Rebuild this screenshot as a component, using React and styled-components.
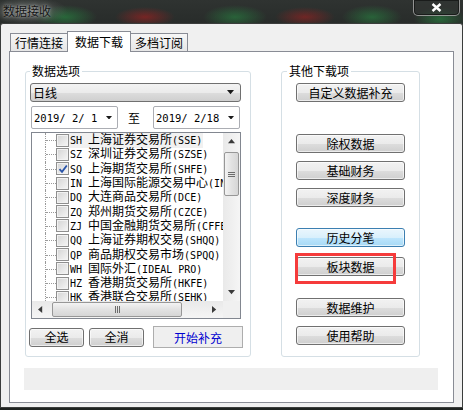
import React from "react";
import styled, { createGlobalStyle, css } from "styled-components";

const CJK = `"Noto Sans CJK SC", "Noto Sans", sans-serif`;
const MONO = `"DejaVu Sans Mono", "Liberation Mono", monospace`;

const GlobalStyle = createGlobalStyle`
  html, body { margin: 0; padding: 0; background: #1f2321; }
  body { font-family: ${CJK}; font-size: 12px; color: #000; }
  * { box-sizing: border-box; }
`;

const exchanges = [
  { code: "SH", name: "上海证券交易所", ex: "(SSE)", focus: true },
  { code: "SZ", name: "深圳证券交易所", ex: "(SZSE)" },
  { code: "SQ", name: "上海期货交易所", ex: "(SHFE)", checked: true },
  { code: "IN", name: "上海国际能源交易中心", ex: "(INE)" },
  { code: "DQ", name: "大连商品交易所", ex: "(DCE)" },
  { code: "ZQ", name: "郑州期货交易所", ex: "(CZCE)" },
  { code: "ZJ", name: "中国金融期货交易所", ex: "(CFFEX)" },
  { code: "QQ", name: "上海证券期权交易", ex: "(SHQQ)" },
  { code: "QP", name: "商品期权交易市场", ex: "(SPQQ)" },
  { code: "WH", name: "国际外汇", ex: "(IDEAL PRO)" },
  { code: "HZ", name: "香港期货交易所", ex: "(HKFE)" },
  { code: "HK", name: "香港联合交易所", ex: "(SEHK)" },
];

// right side buttons, gap = space above the button
const tools = [
  { label: "自定义数据补充", gap: 0 },
  { label: "除权数据", gap: 32 },
  { label: "基础财务", gap: 8 },
  { label: "深度财务", gap: 8 },
  { label: "历史分笔", gap: 21, hot: true },
  { label: "板块数据", gap: 10, marked: true },
  { label: "数据维护", gap: 22 },
  { label: "使用帮助", gap: 9 },
];

const Window = styled.div`
  width: 463px;
  height: 410px;
  display: flex;
  flex-direction: column;
  overflow: hidden;
  background:
    radial-gradient(ellipse 40px 14px at 28px 11px, rgba(120, 124, 122, 0.7), transparent),
    radial-gradient(ellipse 32px 12px at 65px 17px, rgba(40, 150, 70, 0.55), transparent),
    radial-gradient(ellipse 30px 10px at 145px 17px, rgba(180, 30, 30, 0.55), transparent),
    radial-gradient(ellipse 32px 12px at 235px 17px, rgba(40, 150, 70, 0.5), transparent),
    radial-gradient(ellipse 30px 10px at 305px 17px, rgba(180, 30, 30, 0.5), transparent),
    radial-gradient(ellipse 30px 12px at 372px 17px, rgba(40, 150, 70, 0.5), transparent),
    radial-gradient(ellipse 26px 12px at 440px 19px, rgba(40, 150, 70, 0.55), transparent),
    linear-gradient(#2f3331, #262a28 30px, #1e2220);
`;

const TitleBar = styled.div`
  flex: none;
  height: 23px;
  display: flex;
  justify-content: space-between;
  align-items: flex-start;
`;

const Title = styled.div`
  padding: 3px 0 0 3px;
  line-height: 16px;
  color: #141414;
  text-shadow: 0 0 5px rgba(255, 255, 255, 0.55), 0 0 2px rgba(255, 255, 255, 0.4);
`;

const Close = styled.div`
  width: 47px;
  height: 16px;
  margin-right: 3px;
  display: flex;
  align-items: center;
  justify-content: center;
  border: 1px solid rgba(190, 190, 190, 0.7);
  border-top: none;
  border-radius: 0 0 5px 5px;
  box-shadow: inset 0 0 0 1px #1a1c1b;
  background: rgba(50, 54, 52, 0.6);
`;

const Client = styled.div`
  flex: none;
  height: 385px;
  border: 1px solid #3b3d3c;
  border-radius: 3px 3px 0 0;
  background: #f0f0f0;
  padding: 7px 8px 0 8px;
`;

const TabStrip = styled.div`
  height: 20px;
  display: flex;
  align-items: flex-end;
  padding-left: 2px;
  position: relative;
  z-index: 1;
`;

const Tab = styled.div`
  height: 18px;
  padding: 0 4px;
  line-height: 17px;
  border: 1px solid #898c95;
  border-bottom: none;
  margin-left: -1px;
  background: linear-gradient(#f7f7f7, #e6e6e6);
  ${(p) =>
    p.$active &&
    css`
      height: 21px;
      padding: 0 7px;
      line-height: 19px;
      margin-bottom: -1px;
      background: #fff;
    `}
`;

const Panel = styled.div`
  height: 352px;
  border: 1px solid #898c95;
  background: #fff;
  padding: 11px 14px 0 14px;
`;

const Groups = styled.div`
  display: flex;
  gap: 30px;
  padding-left: 1px;
`;

const Group = styled.fieldset`
  margin: 0;
  width: ${(p) => p.$w}px;
  height: 294px;
  border: 1px solid #d5dfe5;
  border-radius: 3px;
  padding: 4px ${(p) => p.$pad}px 0 ${(p) => p.$pad}px;
  display: flex;
  flex-direction: column;
  align-items: flex-start;
`;

const Legend = styled.legend`
  padding: 0 2px;
  line-height: 16px;
  font-size: 12px;
`;

const Combo = styled.div`
  width: 211px;
  height: 19px;
  display: flex;
  align-items: center;
  justify-content: space-between;
  padding: 0 6px 0 2px;
  border: 1px solid #707070;
  border-radius: 3px;
  background: linear-gradient(#f3f3f3, #ebebeb 50%, #dddddd 51%, #cfcfcf);
`;

const DateRow = styled.div`
  margin-top: 4px;
  display: flex;
  align-items: center;
  padding-left: 1px;
`;

const DateBox = styled.div`
  width: 87px;
  height: 23px;
  display: flex;
  align-items: center;
  justify-content: space-between;
  padding: 0 5px 0 2px;
  border: 1px solid #abadb3;
  border-radius: 2px;
  background: #fff;
  font-family: ${MONO};
  font-size: 10.5px;
`;

const To = styled.span`
  margin: 0 13px 0 10px;
`;

const ListBox = styled.div`
  margin: 3px 0 0 1px;
  width: 210px;
  height: 187px;
  border: 1px solid #828790;
  display: grid;
  grid-template-columns: 1fr 17px;
  grid-template-rows: 1fr 17px;
  background: #fff;
`;

const Rows = styled.div`
  overflow: hidden;
`;

const Row = styled.div`
  height: 14.3px;
  display: flex;
  align-items: center;
  white-space: nowrap;
  line-height: 12px;
`;

const Branch = styled.span`
  flex: none;
  align-self: stretch;
  width: 11px;
  margin: 0 0 0 13px;
  border-left: 1px dotted #9a9a9a;
  position: relative;
  &::after {
    content: "";
    position: absolute;
    left: 0;
    right: 0;
    top: 50%;
    border-top: 1px dotted #9a9a9a;
  }
`;

const Check = styled.span`
  flex: none;
  width: 13px;
  height: 13px;
  border: 1px solid #8f8f8f;
  background: linear-gradient(135deg, #d4d4d4, #f6f6f6);
  box-shadow: inset 0 0 0 1px #f2f2f2;
  display: flex;
  align-items: center;
  justify-content: center;
`;

const Label = styled.span`
  padding: 1px 1px;
  line-height: 12px;
  background: ${(p) => (p.$focus ? "#f1f1f1" : "transparent")};
`;

const Code = styled.span`
  font-family: ${MONO};
  font-size: 10px;
`;

const VScroll = styled.div`
  display: flex;
  flex-direction: column;
  background: linear-gradient(90deg, #e9e9e9, #f5f5f5);
`;

const HScroll = styled.div`
  display: flex;
  align-items: center;
  background: linear-gradient(#e9e9e9, #f5f5f5);
`;

const Corner = styled.div`
  background: #f0f0f0;
`;

const Arrow = styled.div`
  flex: none;
  width: 17px;
  height: 17px;
  display: flex;
  align-items: center;
  justify-content: center;
`;

const Thumb = styled.div`
  flex: none;
  display: flex;
  align-items: center;
  justify-content: center;
  border: 1px solid #979797;
  border-radius: 2px;
  ${(p) =>
    p.$vertical
      ? css`
          width: 15px;
          height: 44px;
          margin: 2px 0 0 1px;
          background: linear-gradient(90deg, #f3f3f3, #e2e2e2 50%, #d6d6d6);
        `
      : css`
          width: 130px;
          height: 15px;
          margin-left: 3px;
          background: linear-gradient(#f3f3f3, #e2e2e2 50%, #d6d6d6);
        `}
`;

const Spacer = styled.div`
  flex: 1;
`;

const ButtonRow = styled.div`
  margin: 7px 0 0 -1px;
  display: flex;
  align-items: center;
  gap: 5px;
`;

const Button = styled.div`
  flex: none;
  width: ${(p) => p.$w}px;
  height: 19px;
  display: flex;
  align-items: center;
  justify-content: center;
  border: 1px solid #707070;
  border-radius: 3px;
  background: linear-gradient(#f2f2f2, #ebebeb 50%, #dddddd 51%, #cfcfcf);
  box-shadow: inset 0 0 0 1px rgba(255, 255, 255, 0.6);
  line-height: 16px;
  ${(p) =>
    p.$hot &&
    css`
      border-color: #3c7fb1;
      background: linear-gradient(#eaf6fd, #d9f0fc 50%, #bee6fd 51%, #a7d9f5);
    `}
`;

const StartButton = styled.div`
  margin-left: 4px;
  width: 90px;
  height: 22px;
  display: flex;
  align-items: center;
  justify-content: center;
  border: 1px solid #adadad;
  background: #efefef;
  color: #0000d0;
`;

const ToolSlot = styled.div`
  margin: ${(p) => p.$gap}px 0 0 9px;
  position: relative;
`;

const Marker = styled.div`
  position: absolute;
  left: -1px;
  top: -4px;
  width: 101px;
  height: 31px;
  border: 3px solid #f53b3b;
  pointer-events: none;
`;

const Status = styled.div`
  margin-top: 11px;
  width: 414px;
  height: 22px;
  background: #efefef;
`;

const Tri = ({ dir = "down", size = 7, color = "#1a1a1a" }) => {
  const s = size;
  const pts = {
    down: `0,0 ${s},0 ${s / 2},${s * 0.6}`,
    up: `0,${s * 0.6} ${s},${s * 0.6} ${s / 2},0`,
    left: `${s * 0.6},0 ${s * 0.6},${s} 0,${s / 2}`,
    right: `0,0 0,${s} ${s * 0.6},${s / 2}`,
  }[dir];
  const vertical = dir === "up" || dir === "down";
  return (
    <svg width={vertical ? s : s * 0.6} height={vertical ? s * 0.6 : s}>
      <polygon points={pts} fill={color} />
    </svg>
  );
};

const Grip = ({ vertical }) =>
  vertical ? (
    <svg width="7" height="7">
      <path d="M0 1.5h7M0 3.5h7M0 5.5h7" stroke="#6c6c6c" strokeWidth="1" />
    </svg>
  ) : (
    <svg width="7" height="7">
      <path d="M1.5 0v7M3.5 0v7M5.5 0v7" stroke="#6c6c6c" strokeWidth="1" />
    </svg>
  );

const Tick = () => (
  <svg width="10" height="10" viewBox="0 0 10 10">
    <path d="M1.5 5.2 L4 7.8 L8.8 1.5" fill="none" stroke="#2853a8" strokeWidth="1.8" />
  </svg>
);

const ExchangeRow = ({ item }) => (
  <Row>
    <Branch />
    <Check>{item.checked && <Tick />}</Check>
    <Label $focus={item.focus}>
      <Code>{item.code} </Code>
      {item.name}
      <Code>{item.ex}</Code>
    </Label>
  </Row>
);

const App = () => {
  return (
    <>
      <GlobalStyle />
      <Window>
        <TitleBar>
          <Title>数据接收</Title>
          <Close>
            <svg width="11" height="9" viewBox="0 0 11 9">
              <path d="M1.5 1 L9.5 8 M9.5 1 L1.5 8" stroke="#fff" strokeWidth="2.4" />
            </svg>
          </Close>
        </TitleBar>
        <Client>
          <TabStrip>
            <Tab>行情连接</Tab>
            <Tab $active>数据下载</Tab>
            <Tab>多档订阅</Tab>
          </TabStrip>
          <Panel>
            <Groups>
              <Group $w={226} $pad={4}>
                <Legend>数据选项</Legend>
                <Combo>
                  <span>日线</span>
                  <Tri />
                </Combo>
                <DateRow>
                  <DateBox>
                    <span>2019/ 2/ 1</span>
                    <Tri size={6} />
                  </DateBox>
                  <To>至</To>
                  <DateBox>
                    <span>2019/ 2/18</span>
                    <Tri size={6} />
                  </DateBox>
                </DateRow>
                <ListBox>
                  <Rows>
                    {exchanges.map((item) => (
                      <ExchangeRow key={item.code} item={item} />
                    ))}
                  </Rows>
                  <VScroll>
                    <Arrow>
                      <Tri dir="up" size={7} color="#3a3a3a" />
                    </Arrow>
                    <Thumb $vertical>
                      <Grip vertical />
                    </Thumb>
                    <Spacer />
                    <Arrow>
                      <Tri dir="down" size={7} color="#3a3a3a" />
                    </Arrow>
                  </VScroll>
                  <HScroll>
                    <Arrow>
                      <Tri dir="left" size={7} color="#3a3a3a" />
                    </Arrow>
                    <Thumb>
                      <Grip />
                    </Thumb>
                    <Spacer />
                    <Arrow>
                      <Tri dir="right" size={7} color="#3a3a3a" />
                    </Arrow>
                  </HScroll>
                  <Corner />
                </ListBox>
                <ButtonRow>
                  <Button $w={55}>全选</Button>
                  <Button $w={55}>全消</Button>
                  <StartButton>开始补充</StartButton>
                </ButtonRow>
              </Group>
              <Group $w={139} $pad={5}>
                <Legend>其他下载项</Legend>
                {tools.map((t) => (
                  <ToolSlot key={t.label} $gap={t.gap}>
                    <Button $w={109} $hot={t.hot}>
                      {t.label}
                    </Button>
                    {t.marked && <Marker />}
                  </ToolSlot>
                ))}
              </Group>
            </Groups>
            <Status />
          </Panel>
        </Client>
      </Window>
    </>
  );
};

export default App;
